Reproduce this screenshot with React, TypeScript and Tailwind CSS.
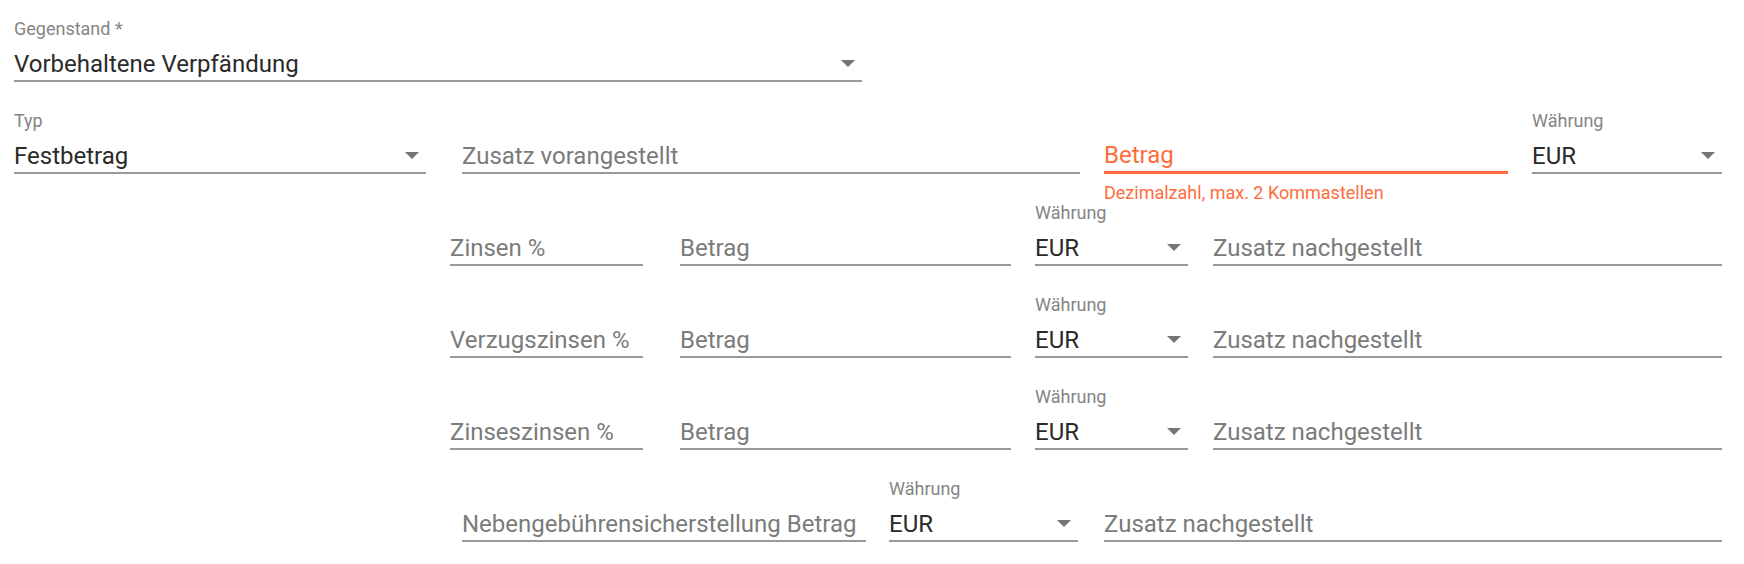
import React from "react";

type FieldProps = {
  label?: string;
  value?: string;
  placeholder?: string;
  select?: boolean;
  error?: string;
  className?: string;
};

function Field({ label, value, placeholder, select, error, className }: FieldProps) {
  const invalid = Boolean(error);
  return (
    <div className={`relative flex h-[64px] flex-col ${className ?? ""}`}>
      <div className="mt-[2px] h-[18px] text-[18px] leading-[18px] text-[#858585]">{label ?? ""}</div>
      <div className="mt-[13px] flex h-[27px] items-center">
        <span
          className={`flex-1 truncate text-[24px] leading-[27px] ${
            value ? "text-[#2a2a2a]" : invalid ? "text-[#ff6b3d]" : "text-[#7b7b7b]"
          }`}
        >
          {value ?? placeholder}
        </span>
        {select && (
          <span className="mr-[7px] mb-[3px] h-0 w-0 border-x-[7px] border-t-[7px] border-x-transparent border-t-[#757575]" />
        )}
      </div>
      <div className="mt-[2px]">
        {invalid ? <div className="h-[3px] bg-[#ff6b3d]" /> : <div className="h-[2px] bg-[#999999]" />}
      </div>
      {error && (
        <div className="absolute left-0 top-[74px] whitespace-nowrap text-[18px] leading-[18px] text-[#ff6b3d]">
          {error}
        </div>
      )}
    </div>
  );
}

const interestRows = ["Zinsen %", "Verzugszinsen %", "Zinseszinsen %"];

export default function App() {
  return (
    <div
      className="min-h-[564px] bg-white pl-[14px] pr-[22px] pt-[18px]"
      style={{ fontFamily: "Roboto, 'Noto Sans', sans-serif" }}
    >
      <div className="flex flex-col gap-[28px]">
        <div className="flex">
          <Field label="Gegenstand *" value="Vorbehaltene Verpfändung" select className="w-[848px]" />
        </div>

        <div className="flex">
          <Field label="Typ" value="Festbetrag" select className="w-[412px]" />
          <Field placeholder="Zusatz vorangestellt" className="ml-[36px] w-[618px]" />
          <Field placeholder="Betrag" error="Dezimalzahl, max. 2 Kommastellen" className="ml-[24px] w-[404px]" />
          <Field label="Währung" value="EUR" select className="ml-[24px] flex-1" />
        </div>

        {interestRows.map((row) => (
          <div key={row} className="ml-[436px] flex">
            <Field placeholder={row} className="w-[193px]" />
            <Field placeholder="Betrag" className="ml-[37px] w-[331px]" />
            <Field label="Währung" value="EUR" select className="ml-[24px] w-[153px]" />
            <Field placeholder="Zusatz nachgestellt" className="ml-[25px] flex-1" />
          </div>
        ))}

        <div className="ml-[448px] flex">
          <Field placeholder="Nebengebührensicherstellung Betrag" className="w-[404px]" />
          <Field label="Währung" value="EUR" select className="ml-[23px] w-[189px]" />
          <Field placeholder="Zusatz nachgestellt" className="ml-[26px] flex-1" />
        </div>
      </div>
    </div>
  );
}
